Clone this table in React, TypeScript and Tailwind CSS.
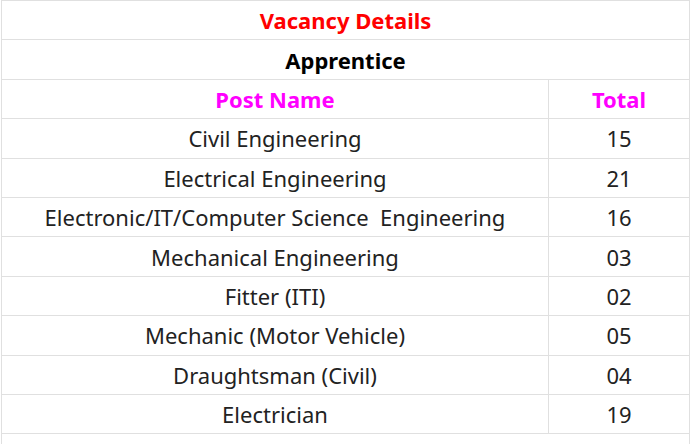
import React from "react";

const rows: [string, string][] = [
  ["Civil Engineering", "15"],
  ["Electrical Engineering", "21"],
  ["Electronic/IT/Computer Science\u00a0 Engineering", "16"],
  ["Mechanical Engineering", "03"],
  ["Fitter (ITI)", "02"],
  ["Mechanic (Motor Vehicle)", "05"],
  ["Draughtsman (Civil)", "04"],
  ["Electrician", "19"],
];

export default function App() {
  return (
    <div className="w-[690px] h-[444px] overflow-hidden bg-white" style={{ fontFamily: '"Noto Sans", "Open Sans", sans-serif' }}>
      <table className="ml-[1px] w-[688px] border-collapse table-fixed text-[22px] text-[#222]">
        <colgroup>
          <col className="w-[547px]" />
          <col className="w-[141px]" />
        </colgroup>
        <tbody>
          <tr className="h-[39.4px]">
            <td colSpan={2} className="border border-[#e0e0e0] text-center font-bold text-[#ff0000] p-0 leading-none">Vacancy Details</td>
          </tr>
          <tr className="h-[39.4px]">
            <td colSpan={2} className="border border-[#e0e0e0] text-center font-bold text-black p-0 leading-none">Apprentice</td>
          </tr>
          <tr className="h-[39.4px]">
            <td className="border border-[#e0e0e0] text-center font-bold text-[#ff00ff] p-0 leading-none">Post Name</td>
            <td className="border border-[#e0e0e0] text-center font-bold text-[#ff00ff] p-0 leading-none">Total</td>
          </tr>
          {rows.map(([n, t]) => (
            <tr key={n} className="h-[39.4px]">
              <td className="border border-[#e0e0e0] text-center p-0 leading-none">{n}</td>
              <td className="border border-[#e0e0e0] text-center p-0 leading-none">{t}</td>
            </tr>
          ))}
          <tr className="h-[39.4px]">
            <td colSpan={2} className="border border-[#e0e0e0] p-0"></td>
          </tr>
        </tbody>
      </table>
    </div>
  );
}
